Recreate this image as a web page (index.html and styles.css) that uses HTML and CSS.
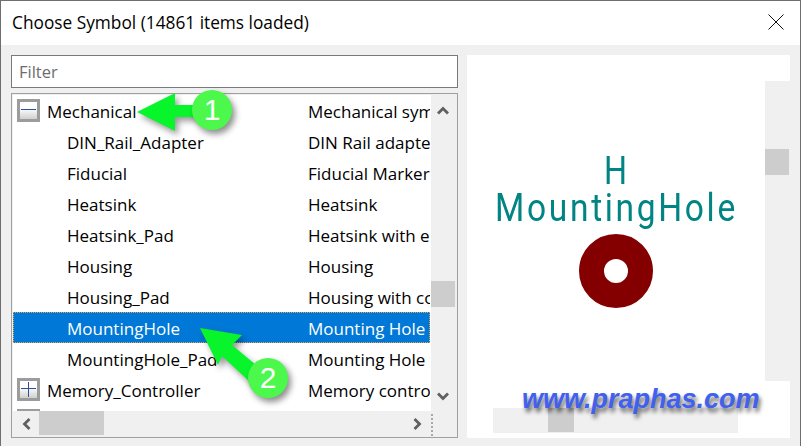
FILE: index.html
```html
<!DOCTYPE html>
<html lang="en">
<head>
<meta charset="utf-8">
<title>Choose Symbol</title>
<link rel="stylesheet" href="styles.css">
</head>
<body>
<div class="window">
  <header class="titlebar">
    <span class="title">Choose Symbol (14861 items loaded)</span>
    <svg class="close" width="16" height="16" viewBox="0 0 16 16"><path d="M.5.5l15 15M15.500.5l-15 15" stroke="#111" stroke-width="1" fill="none"/></svg>
  </header>
  <main class="content">
    <section class="left">
      <div class="filter">Filter</div>
      <div class="tree">
        <div class="tree-main">
          <div class="list">
            <div class="row root"><span class="exp"><i class="h"></i></span><span class="name">Mechanical</span><span class="desc">Mechanical symbols</span></div>
            <div class="row"><span class="name">DIN_Rail_Adapter</span><span class="desc">DIN Rail adapter</span></div>
            <div class="row"><span class="name">Fiducial</span><span class="desc">Fiducial Marker</span></div>
            <div class="row"><span class="name">Heatsink</span><span class="desc">Heatsink</span></div>
            <div class="row"><span class="name">Heatsink_Pad</span><span class="desc">Heatsink with electrical pad</span></div>
            <div class="row"><span class="name">Housing</span><span class="desc">Housing</span></div>
            <div class="row"><span class="name">Housing_Pad</span><span class="desc">Housing with connection</span></div>
            <div class="row selected"><span class="name">MountingHole</span><span class="desc">Mounting Hole</span></div>
            <div class="row"><span class="name">MountingHole_Pad</span><span class="desc">Mounting Hole with pad</span></div>
            <div class="row root"><span class="exp"><i class="h"></i><i class="v"></i></span><span class="name">Memory_Controller</span><span class="desc">Memory controller</span></div>
            <div class="row root"><span class="exp"></span></div>
          </div>
          <div class="vbar">
            <span class="sbtn vbtn"><svg width="12" height="9" viewBox="0 0 12 9"><path d="M1 7.500l5-5 5 5" class="chev"/></svg></span>
            <span class="thumb list-vthumb"></span>
            <span class="grow"></span>
            <span class="sbtn vbtn"><svg width="12" height="9" viewBox="0 0 12 9"><path d="M1 1.500l5 5 5-5" class="chev"/></svg></span>
          </div>
        </div>
        <div class="tree-foot">
          <div class="hbar">
            <span class="sbtn hbtn-l"><svg width="9" height="12" viewBox="0 0 9 12"><path d="M7.500 1l-5 5 5 5" class="chev"/></svg></span>
            <span class="thumb list-hthumb"></span>
            <span class="grow"></span>
            <span class="sbtn hbtn-r"><svg width="9" height="12" viewBox="0 0 9 12"><path d="M1.500 1l5 5-5 5" class="chev"/></svg></span>
          </div>
          <div class="grip"></div>
        </div>
      </div>
    </section>
    <section class="preview">
      <div class="preview-main">
        <div class="canvas">
          <div class="ref">H</div>
          <div class="val">MountingHole</div>
          <div class="pad"></div>
        </div>
        <div class="pv-vbar"><span class="thumb pv-vthumb"></span></div>
      </div>
      <div class="pv-hbar"><span class="thumb pv-hthumb"></span></div>
    </section>
  </main>

  <svg class="arrows" width="801" height="446" viewBox="0 0 801 446">
    <path class="arrow" d="M137 112L175 93V105H200V117H175V131Z"/>
    <path class="arrow" d="M200 328L242 335L232 345L262 370L250 382L222 356L218 365Z"/>
  </svg>
  <div class="badge badge-1">1</div>
  <div class="badge badge-2">2</div>
  <div class="watermark">www.praphas.com</div>
</div>
</body>
</html>
```

FILE: styles.css
```css
* { box-sizing: border-box; }
html, body { margin: 0; padding: 0; }
body {
  width: 801px;
  height: 446px;
  overflow: hidden;
  font-family: "Open Sans", "Noto Sans", sans-serif;
  color: #000;
}
.window {
  position: relative;
  width: 801px;
  height: 446px;
  display: flex;
  flex-direction: column;
  background: #f0f0f0;
  border: 1px solid #6e6e6e;
  border-bottom: 0;
  overflow: hidden;
}
.titlebar {
  height: 44px;
  flex: none;
  background: #fff;
  display: flex;
  align-items: center;
  justify-content: space-between;
  padding: 0 16px 2px 11px;
}
.title { font-size: 17.300px; white-space: nowrap; }
.close { display: block; }
.content {
  flex: 1;
  display: flex;
  gap: 9px;
  padding: 10px 10px 0;
}
.left { width: 447px; flex: none; }
.filter {
  height: 33px;
  background: #fff;
  border: 1px solid #7a7a7a;
  padding: 0 7px;
  display: flex;
  align-items: center;
  font-size: 16.500px;
  color: #6d6d6d;
}
.tree {
  margin-top: 5px;
  height: 345px;
  border: 1px solid #a0a0a0;
  padding: 1px;
  background: #f0f0f0;
}
.tree-main { display: flex; height: 316px; }
.list { width: 418px; background: #fff; overflow: hidden; flex: none; }
.row {
  height: 31px;
  display: flex;
  align-items: center;
  font-size: 17px;
  white-space: nowrap;
  padding-left: 54px;
  margin-right: 1px;
  overflow: hidden;
  padding-top: 1px;
}
.row.root { padding-left: 4px; }
.row .name { width: 241px; flex: none; }
.row.root .name { width: 261px; margin-left: 7px; }
.row .desc { flex: none; }
.row.selected {
  background: #0078d7;
  color: #fff;
  outline: 1px dotted #e8a24a;
  outline-offset: -1px;
}
.exp {
  position: relative;
  width: 23px;
  height: 23px;
  flex: none;
  align-self: flex-start;
  margin-top: 3px;
  border: 3px solid #9c9c9c;
  background: linear-gradient(#fff 35%, #d0d0d0);
  display: block;
}
.exp i { position: absolute; background: #2f4f9c; display: block; }
.exp .h { left: 1px; right: 1px; top: 7px; height: 1px; }
.exp .v { top: 1px; bottom: 1px; left: 8px; width: 1px; }
.vbar { width: 25px; display: flex; flex-direction: column; flex: none; }
.sbtn { display: flex; align-items: center; justify-content: center; flex: none; }
.vbtn { height: 30px; width: 24px; }
.chev { fill: none; stroke: #606060; stroke-width: 2.800; }
.thumb { display: block; background: #cdcdcd; flex: none; }
.grow { flex: 1; }
.list-vthumb { height: 26px; width: 24px; margin-top: 156px; }
.tree-foot { display: flex; height: 25px; }
.hbar { width: 418px; display: flex; flex: none; }
.hbtn-l { width: 26px; }
.hbtn-r { width: 28px; }
.list-hthumb { width: 65px; height: 24px; }
.grip {
  width: 25px;
  height: 22px;
  margin-top: 3px;
  border-left: 2px dotted #a8a8a8;
}
.preview {
  width: 323px;
  flex: none;
  height: 383px;
  background: #fff;
  padding-top: 26px;
}
.preview-main { display: flex; height: 300px; }
.canvas {
  width: 298px;
  flex: none;
  display: flex;
  flex-direction: column;
  align-items: center;
  padding-top: 72px;
  color: #008484;
  font-family: Roboto, sans-serif;
}
.ref { font-size: 38px; line-height: 37px; height: 37px; transform: scaleX(.85); }
.val {
  font-size: 38px;
  line-height: 37px;
  height: 37px;
  letter-spacing: 3px;
  white-space: nowrap;
  transform: scaleX(.883);
}
.pad {
  width: 74px;
  height: 74px;
  margin-top: 7px;
  border-radius: 50%;
  border: 25px solid #840000;
  background: #fff;
}
.pv-vbar { width: 25px; background: #f0f0f0; padding-top: 68px; }
.pv-vthumb { width: 24px; height: 26px; }
.pv-hbar {
  width: 245px;
  height: 25px;
  margin: 27px 0 0 26px;
  background: #f0f0f0;
  padding-left: 55px;
}
.pv-hthumb { width: 26px; height: 24px; }
.arrows {
  position: absolute;
  left: -1px;
  top: -1px;
  filter: drop-shadow(3px 4px 3px rgba(0,0,0,.4));
}
.arrow { fill: #08f52c; }
.badge {
  position: absolute;
  width: 40px;
  height: 40px;
  border-radius: 50%;
  background: #4cf84c;
  color: #fff;
  font-family: "Liberation Sans", sans-serif;
  font-size: 30px;
  display: flex;
  align-items: center;
  justify-content: center;
  box-shadow: 3px 4px 6px rgba(0,0,0,.45);
}
.badge-1 { left: 191px; top: 89px; }
.badge-2 { left: 247px; top: 357px; }
.watermark {
  position: absolute;
  left: 521px;
  top: 382px;
  font-family: "Liberation Sans", sans-serif;
  font-weight: bold;
  font-style: italic;
  font-size: 27px;
  line-height: 32px;
  letter-spacing: 0;
  color: #4060f0;
  text-shadow: 2px 4px 4px rgba(0,0,0,.6);
  white-space: nowrap;
}
```
